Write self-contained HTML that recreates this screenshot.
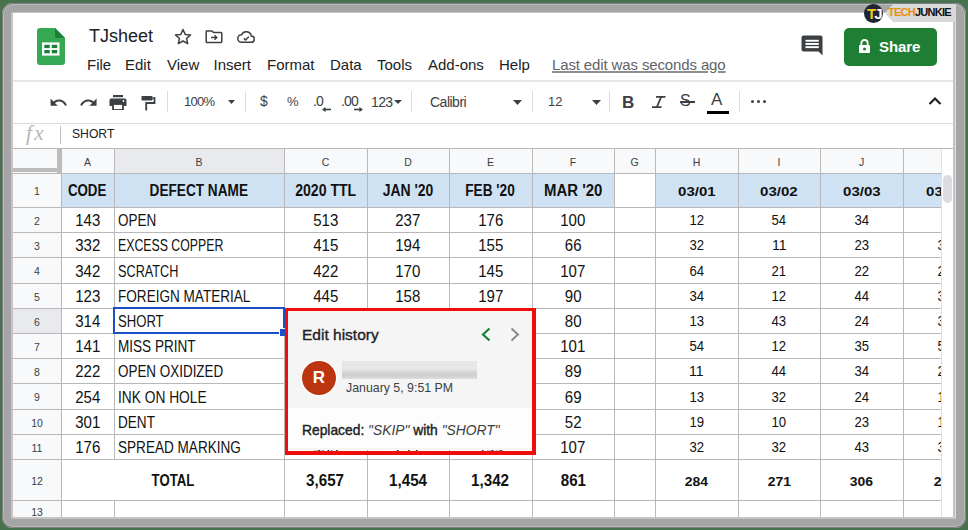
<!DOCTYPE html>
<html><head><meta charset="utf-8">
<style>
html,body{margin:0;padding:0}
body{width:968px;height:530px;overflow:hidden;position:relative;background:#48714d;font-family:"Liberation Sans",sans-serif}
#frame{position:absolute;left:2px;top:3px;width:964px;height:525px;background:#a5a5a5;border-radius:11px;box-shadow:inset 0 0 0 1px #808086, inset 0 0 0 2px #b9b9b9}
#page{position:absolute;left:0;top:0;width:968px;height:530px;clip-path:inset(13px 15px 13px 13px);background:#fff}
.a{position:absolute}
.menu{position:absolute;top:56px;font-size:15px;color:#202124;white-space:nowrap}
.tb{position:absolute}
.sep{position:absolute;top:91px;width:1px;height:21px;background:#dadce0}
</style></head><body>
<div id="frame"></div>
<div class="a" style="left:11px;top:12px;width:945px;height:507px;background:#c4c4c4;border-radius:2px;box-shadow:inset -1px 0 0 #dedede"></div>
<div id="page">
<!-- header -->
<svg class="a" style="left:36px;top:27px" width="30" height="39" viewBox="0 0 30 39">
  <path d="M3 1 H19 L29 11 V35 a3 3 0 0 1 -3 3 H4 a3 3 0 0 1 -3 -3 V4 a3 3 0 0 1 3 -3z" fill="#34a853"/>
  <path d="M19 1 L29 11 H21 a2 2 0 0 1 -2 -2z" fill="#188038"/>
  <rect x="6" y="15.4" width="17.5" height="13.2" fill="#fff"/>
  <rect x="8.3" y="17.8" width="5.4" height="3.3" fill="#188038"/>
  <rect x="15.8" y="17.8" width="5.4" height="3.3" fill="#188038"/>
  <rect x="8.3" y="23" width="5.4" height="3.3" fill="#188038"/>
  <rect x="15.8" y="23" width="5.4" height="3.3" fill="#188038"/>
</svg>
<div class="a" style="left:89px;top:26px;font-size:18px;color:#202124;white-space:nowrap">TJsheet</div>
<!-- star -->
<svg class="a" style="left:173px;top:27.5px" width="20" height="17" viewBox="0 0 20 17">
  <path d="M10 1.5 L12.2 6.4 L17.6 6.9 L13.5 10.5 L14.7 15.7 L10 13 L5.3 15.7 L6.5 10.5 L2.4 6.9 L7.8 6.4 Z" fill="none" stroke="#3c4043" stroke-width="1.5" stroke-linejoin="round"/>
</svg>
<!-- folder move -->
<svg class="a" style="left:205px;top:29px" width="18" height="15" viewBox="0 0 18 15">
  <path d="M1.5 2 H7 L8.5 3.5 H16 a0.8 0.8 0 0 1 0.8 .8 V12.7 a0.8 0.8 0 0 1 -.8 .8 H2 a0.8 0.8 0 0 1 -.8 -.8 V2.5z" fill="none" stroke="#3c4043" stroke-width="1.5"/>
  <path d="M6 8.5 H11.5 M9.5 6.3 L11.8 8.5 L9.5 10.7" fill="none" stroke="#3c4043" stroke-width="1.4"/>
</svg>
<!-- cloud check -->
<svg class="a" style="left:237px;top:30px" width="19" height="14" viewBox="0 0 19 14">
  <path d="M4.6 12.3 H14 a3.1 3.1 0 0 0 .3 -6.2 A5.1 5.1 0 0 0 4.6 4.7 A3.8 3.8 0 0 0 4.6 12.3z" fill="none" stroke="#3c4043" stroke-width="1.5"/>
  <path d="M6.9 8.4 L8.6 10 L11.8 6.8" fill="none" stroke="#3c4043" stroke-width="1.5"/>
</svg>
<!-- menu -->
<div class="menu" style="left:87px">File</div>
<div class="menu" style="left:125px">Edit</div>
<div class="menu" style="left:167px">View</div>
<div class="menu" style="left:213.5px">Insert</div>
<div class="menu" style="left:267px">Format</div>
<div class="menu" style="left:330px">Data</div>
<div class="menu" style="left:377px">Tools</div>
<div class="menu" style="left:428px">Add-ons</div>
<div class="menu" style="left:499px">Help</div>
<div class="menu" style="left:552px;color:#5f6368;text-decoration:underline;text-decoration-color:#8e8e8e;text-decoration-thickness:1.5px;letter-spacing:-0.13px">Last edit was seconds ago</div>
<!-- comment icon -->
<svg class="a" style="left:800px;top:34px" width="25" height="24" viewBox="0 0 25 24">
  <path d="M3.5 1.5 H20.5 a2 2 0 0 1 2 2 V21.5 L18.5 17.5 H3.5 a2 2 0 0 1 -2 -2 V3.5 a2 2 0 0 1 2 -2z" fill="#3c4043"/>
  <rect x="5.5" y="5.8" width="13.3" height="1.9" fill="#fff"/>
  <rect x="5.5" y="9" width="13.3" height="1.9" fill="#fff"/>
  <rect x="5.5" y="12.2" width="13.3" height="1.9" fill="#fff"/>
</svg>
<!-- share -->
<div class="a" style="left:844px;top:28px;width:93px;height:38px;background:#1e7e34;border-radius:5px"></div>
<svg class="a" style="left:858px;top:39px" width="13" height="14" viewBox="0 0 13 14">
  <path d="M3.3 6 V4.2 a3.2 3.2 0 0 1 6.4 0 V6" fill="none" stroke="#fff" stroke-width="1.8"/>
  <rect x="1" y="6" width="11" height="8" rx="1" fill="#fff"/>
  <circle cx="6.5" cy="10" r="1.5" fill="#1e7e34"/>
</svg>
<div class="a" style="left:879px;top:38px;font-size:15px;font-weight:bold;color:#fff;letter-spacing:-0.1px">Share</div>
<!-- header separator -->
<div class="a" style="left:13px;top:80px;width:940px;height:2px;background:#e6e7e8"></div>
<!-- toolbar -->
<svg class="a" style="left:49px;top:93px" width="19.2" height="19.2" viewBox="0 0 24 24"><path d="M12.5 8c-2.65 0-5.05.99-6.9 2.6L2 7v9h9l-3.62-3.62c1.39-1.16 3.16-1.88 5.12-1.88 3.54 0 6.55 2.31 7.6 5.5l2.37-.78C21.08 11.03 17.15 8 12.5 8z" fill="#3c4043"/></svg>
<svg class="a" style="left:79px;top:93px" width="19.2" height="19.2" viewBox="0 0 24 24"><path d="M18.4 10.6C16.55 8.99 14.15 8 11.5 8c-4.65 0-8.58 3.03-9.96 7.22L3.9 16c1.05-3.19 4.05-5.5 7.6-5.5 1.95 0 3.73.72 5.12 1.88L13 16h9V7l-3.6 3.6z" fill="#3c4043"/></svg>
<svg class="a" style="left:109px;top:95px" width="18" height="15" viewBox="0 0 18 15">
  <rect x="4" y="0" width="10" height="2.2" fill="#3c4043"/>
  <path d="M2 3.5 H16 a1.5 1.5 0 0 1 1.5 1.5 V11 H14 V9 H4 V11 H0.5 V5 A1.5 1.5 0 0 1 2 3.5z" fill="#3c4043"/>
  <rect x="4" y="9" width="10" height="6" fill="none" stroke="#3c4043" stroke-width="1.8"/>
  <circle cx="14.5" cy="6" r="0.9" fill="#fff"/>
</svg>
<svg class="a" style="left:141px;top:95px" width="15" height="16" viewBox="0 0 15 16">
  <rect x="0.5" y="1" width="11" height="4.5" rx="0.7" fill="#3c4043"/>
  <path d="M11.5 3.2 H13.5 V8 H5.2 V15.5" fill="none" stroke="#3c4043" stroke-width="1.8"/>
</svg>
<div class="sep" style="left:167px"></div>
<div class="a" style="left:184px;top:94px;font-size:13px;color:#3c4043;letter-spacing:-0.7px">100%</div>
<svg class="a" style="left:228px;top:100px" width="7" height="4" viewBox="0 0 9 5" preserveAspectRatio="none"><path d="M0 0 H9 L4.5 5z" fill="#3c4043"/></svg>
<div class="sep" style="left:245px"></div>
<div class="a" style="left:260px;top:93px;font-size:14px;color:#3c4043">$</div>
<div class="a" style="left:287px;top:94px;font-size:13px;color:#3c4043">%</div>
<div class="a" style="left:313px;top:93px;font-size:14px;color:#3c4043;letter-spacing:-0.8px">.0</div>
<svg class="a" style="left:322px;top:107px" width="9" height="5" viewBox="0 0 9 5"><path d="M9 2.5 H3" stroke="#3c4043" stroke-width="1.6"/><path d="M0 2.5 L3.6 0 V5z" fill="#3c4043"/></svg>
<div class="a" style="left:341px;top:93px;font-size:14px;color:#3c4043;letter-spacing:-0.8px">.00</div>
<svg class="a" style="left:354px;top:107px" width="9" height="5" viewBox="0 0 9 5"><path d="M0 2.5 H6" stroke="#3c4043" stroke-width="1.6"/><path d="M9 2.5 L5.4 0 V5z" fill="#3c4043"/></svg>
<div class="a" style="left:371px;top:94px;font-size:14px;color:#3c4043;letter-spacing:-0.6px">123</div>
<svg class="a" style="left:394px;top:100px" width="8" height="4" viewBox="0 0 9 5" preserveAspectRatio="none"><path d="M0 0 H9 L4.5 5z" fill="#3c4043"/></svg>
<div class="sep" style="left:411px"></div>
<div class="a" style="left:430px;top:94px;font-size:14px;color:#3c4043;letter-spacing:-0.5px">Calibri</div>
<svg class="a" style="left:513px;top:100px" width="9" height="5" viewBox="0 0 9 5"><path d="M0 0 H9 L4.5 5z" fill="#3c4043"/></svg>
<div class="sep" style="left:532px"></div>
<div class="a" style="left:548px;top:94px;font-size:13px;color:#3c4043">12</div>
<svg class="a" style="left:592px;top:100px" width="9" height="5" viewBox="0 0 9 5"><path d="M0 0 H9 L4.5 5z" fill="#3c4043"/></svg>
<div class="sep" style="left:609px"></div>
<div class="a" style="left:622px;top:93px;font-size:17px;font-weight:bold;color:#3c4043">B</div>
<svg class="a" style="left:650px;top:94px" width="18" height="16" viewBox="0 0 18 16"><path d="M6 2.8 H15.5 M2 13.2 H11.5 M11.2 2.8 L6.8 13.2" fill="none" stroke="#3c4043" stroke-width="1.7"/></svg>
<div class="a" style="left:680px;top:92px;font-size:16px;color:#3c4043">S</div>
<div class="a" style="left:680px;top:101px;width:15px;height:1.6px;background:#3c4043"></div>
<div class="a" style="left:711px;top:90px;font-size:17px;color:#3c4043">A</div>
<div class="a" style="left:707px;top:111px;width:22px;height:3px;background:#000"></div>
<div class="sep" style="left:739px"></div>
<div class="a" style="left:751px;top:100px;width:3px;height:3px;background:#3c4043;border-radius:50%"></div>
<div class="a" style="left:757px;top:100px;width:3px;height:3px;background:#3c4043;border-radius:50%"></div>
<div class="a" style="left:763px;top:100px;width:3px;height:3px;background:#3c4043;border-radius:50%"></div>
<svg class="a" style="left:928px;top:96px" width="14" height="10" viewBox="0 0 14 10"><path d="M1.5 8 L7 2.5 L12.5 8" fill="none" stroke="#202124" stroke-width="2.2"/></svg>
<!-- toolbar bottom -->
<div class="a" style="left:13px;top:123px;width:940px;height:1px;background:#dadce0"></div>
<!-- formula bar -->
<div class="a" style="left:26px;top:121px;font-family:'Liberation Serif',serif;font-style:italic;font-size:21px;color:#b5b5b5;letter-spacing:2.5px">fx</div>
<div class="a" style="left:60px;top:126px;width:1px;height:18px;background:#c0c0c0"></div>
<div class="a" style="left:72px;top:126px;font-size:13.5px;color:#202124;transform:scaleX(0.9);transform-origin:left">SHORT</div>
<div style="position:absolute;left:13px;top:173px;width:48px;height:367px;background:#f8f9fa"></div>
<div style="position:absolute;left:13px;top:148px;width:940px;height:25px;background:#f8f9fa"></div>
<div style="position:absolute;left:114px;top:148px;width:170px;height:25px;background:#e8eaed"></div>
<div style="position:absolute;left:13px;top:308px;width:48px;height:25px;background:#e8eaed"></div>
<div style="position:absolute;left:61px;top:173px;width:553px;height:34px;background:#cfe2f3"></div>
<div style="position:absolute;left:655px;top:173px;width:335px;height:34px;background:#cfe2f3"></div>
<div style="position:absolute;left:13px;top:148px;width:940px;height:1px;background:#b8b8b8"></div>
<div style="position:absolute;left:13px;top:173px;width:940px;height:1px;background:#b8b8b8"></div>
<div style="position:absolute;left:13px;top:207px;width:940px;height:1px;background:#b8b8b8"></div>
<div style="position:absolute;left:13px;top:232px;width:940px;height:1px;background:#b8b8b8"></div>
<div style="position:absolute;left:13px;top:257px;width:940px;height:1px;background:#b8b8b8"></div>
<div style="position:absolute;left:13px;top:283px;width:940px;height:1px;background:#b8b8b8"></div>
<div style="position:absolute;left:13px;top:308px;width:940px;height:1px;background:#b8b8b8"></div>
<div style="position:absolute;left:13px;top:333px;width:940px;height:1px;background:#b8b8b8"></div>
<div style="position:absolute;left:13px;top:358px;width:940px;height:1px;background:#b8b8b8"></div>
<div style="position:absolute;left:13px;top:383px;width:940px;height:1px;background:#b8b8b8"></div>
<div style="position:absolute;left:13px;top:409px;width:940px;height:1px;background:#b8b8b8"></div>
<div style="position:absolute;left:13px;top:434px;width:940px;height:1px;background:#b8b8b8"></div>
<div style="position:absolute;left:13px;top:459px;width:940px;height:1px;background:#b8b8b8"></div>
<div style="position:absolute;left:13px;top:500px;width:940px;height:1px;background:#b8b8b8"></div>
<div style="position:absolute;left:13px;top:522px;width:940px;height:1px;background:#b8b8b8"></div>
<div style="position:absolute;left:61px;top:148px;width:1px;height:392px;background:#b8b8b8"></div>
<div style="position:absolute;left:114px;top:148px;width:1px;height:311px;background:#b8b8b8"></div>
<div style="position:absolute;left:114px;top:500px;width:1px;height:40px;background:#b8b8b8"></div>
<div style="position:absolute;left:284px;top:148px;width:1px;height:392px;background:#b8b8b8"></div>
<div style="position:absolute;left:367px;top:148px;width:1px;height:392px;background:#b8b8b8"></div>
<div style="position:absolute;left:449px;top:148px;width:1px;height:392px;background:#b8b8b8"></div>
<div style="position:absolute;left:532px;top:148px;width:1px;height:392px;background:#b8b8b8"></div>
<div style="position:absolute;left:614px;top:148px;width:1px;height:392px;background:#b8b8b8"></div>
<div style="position:absolute;left:655px;top:148px;width:1px;height:392px;background:#b8b8b8"></div>
<div style="position:absolute;left:738px;top:148px;width:1px;height:392px;background:#b8b8b8"></div>
<div style="position:absolute;left:820px;top:148px;width:1px;height:392px;background:#b8b8b8"></div>
<div style="position:absolute;left:903px;top:148px;width:1px;height:392px;background:#b8b8b8"></div>
<div style="position:absolute;left:61px;top:148px;width:53px;height:25px;line-height:28px;text-align:center;font-size:10.5px;color:#3c4043">A</div>
<div style="position:absolute;left:114px;top:148px;width:170px;height:25px;line-height:28px;text-align:center;font-size:10.5px;color:#3c4043">B</div>
<div style="position:absolute;left:284px;top:148px;width:83px;height:25px;line-height:28px;text-align:center;font-size:10.5px;color:#3c4043">C</div>
<div style="position:absolute;left:367px;top:148px;width:82px;height:25px;line-height:28px;text-align:center;font-size:10.5px;color:#3c4043">D</div>
<div style="position:absolute;left:449px;top:148px;width:83px;height:25px;line-height:28px;text-align:center;font-size:10.5px;color:#3c4043">E</div>
<div style="position:absolute;left:532px;top:148px;width:82px;height:25px;line-height:28px;text-align:center;font-size:10.5px;color:#3c4043">F</div>
<div style="position:absolute;left:614px;top:148px;width:41px;height:25px;line-height:28px;text-align:center;font-size:10.5px;color:#3c4043">G</div>
<div style="position:absolute;left:655px;top:148px;width:83px;height:25px;line-height:28px;text-align:center;font-size:10.5px;color:#3c4043">H</div>
<div style="position:absolute;left:738px;top:148px;width:82px;height:25px;line-height:28px;text-align:center;font-size:10.5px;color:#3c4043">I</div>
<div style="position:absolute;left:820px;top:148px;width:83px;height:25px;line-height:28px;text-align:center;font-size:10.5px;color:#3c4043">J</div>
<div style="position:absolute;left:903px;top:148px;width:87px;height:25px;line-height:28px;text-align:center;font-size:10.5px;color:#3c4043">K</div>
<div style="position:absolute;left:13px;top:173px;width:48px;height:34px;line-height:37px;text-align:center;font-size:10.5px;color:#3c4043">1</div>
<div style="position:absolute;left:13px;top:207px;width:48px;height:25px;line-height:28px;text-align:center;font-size:10.5px;color:#3c4043">2</div>
<div style="position:absolute;left:13px;top:232px;width:48px;height:25px;line-height:28px;text-align:center;font-size:10.5px;color:#3c4043">3</div>
<div style="position:absolute;left:13px;top:257px;width:48px;height:26px;line-height:29px;text-align:center;font-size:10.5px;color:#3c4043">4</div>
<div style="position:absolute;left:13px;top:283px;width:48px;height:25px;line-height:28px;text-align:center;font-size:10.5px;color:#3c4043">5</div>
<div style="position:absolute;left:13px;top:308px;width:48px;height:25px;line-height:28px;text-align:center;font-size:10.5px;color:#3c4043">6</div>
<div style="position:absolute;left:13px;top:333px;width:48px;height:25px;line-height:28px;text-align:center;font-size:10.5px;color:#3c4043">7</div>
<div style="position:absolute;left:13px;top:358px;width:48px;height:25px;line-height:28px;text-align:center;font-size:10.5px;color:#3c4043">8</div>
<div style="position:absolute;left:13px;top:383px;width:48px;height:26px;line-height:29px;text-align:center;font-size:10.5px;color:#3c4043">9</div>
<div style="position:absolute;left:13px;top:409px;width:48px;height:25px;line-height:28px;text-align:center;font-size:10.5px;color:#3c4043">10</div>
<div style="position:absolute;left:13px;top:434px;width:48px;height:25px;line-height:28px;text-align:center;font-size:10.5px;color:#3c4043">11</div>
<div style="position:absolute;left:13px;top:459px;width:48px;height:41px;line-height:44px;text-align:center;font-size:10.5px;color:#3c4043">12</div>
<div style="position:absolute;left:13px;top:500px;width:48px;height:22px;line-height:25px;text-align:center;font-size:10.5px;color:#3c4043">13</div>
<div style="position:absolute;left:61px;top:174px;width:53px;height:34px;line-height:34px;text-align:center;box-sizing:border-box;font-size:16px;font-weight:bold;color:#111;white-space:nowrap"><span style="display:inline-block;transform:scaleX(0.832);transform-origin:center">CODE</span></div>
<div style="position:absolute;left:114px;top:174px;width:170px;height:34px;line-height:34px;text-align:center;box-sizing:border-box;font-size:16px;font-weight:bold;color:#111;white-space:nowrap"><span style="display:inline-block;transform:scaleX(0.852);transform-origin:center">DEFECT NAME</span></div>
<div style="position:absolute;left:284px;top:174px;width:83px;height:34px;line-height:34px;text-align:center;box-sizing:border-box;font-size:16px;font-weight:bold;color:#111;white-space:nowrap"><span style="display:inline-block;transform:scaleX(0.881);transform-origin:center">2020 TTL</span></div>
<div style="position:absolute;left:367px;top:174px;width:82px;height:34px;line-height:34px;text-align:center;box-sizing:border-box;font-size:16px;font-weight:bold;color:#111;white-space:nowrap"><span style="display:inline-block;transform:scaleX(0.871);transform-origin:center">JAN '20</span></div>
<div style="position:absolute;left:449px;top:174px;width:83px;height:34px;line-height:34px;text-align:center;box-sizing:border-box;font-size:16px;font-weight:bold;color:#111;white-space:nowrap"><span style="display:inline-block;transform:scaleX(0.852);transform-origin:center">FEB '20</span></div>
<div style="position:absolute;left:532px;top:174px;width:82px;height:34px;line-height:34px;text-align:center;box-sizing:border-box;font-size:16px;font-weight:bold;color:#111;white-space:nowrap"><span style="display:inline-block;transform:scaleX(0.934);transform-origin:center">MAR '20</span></div>
<div style="position:absolute;left:655px;top:175px;width:83px;height:34px;line-height:34px;text-align:center;box-sizing:border-box;font-size:13.5px;font-weight:bold;color:#111;white-space:nowrap"><span style="display:inline-block;transform:scaleX(1.113);transform-origin:center">03/01</span></div>
<div style="position:absolute;left:738px;top:175px;width:82px;height:34px;line-height:34px;text-align:center;box-sizing:border-box;font-size:13.5px;font-weight:bold;color:#111;white-space:nowrap"><span style="display:inline-block;transform:scaleX(1.113);transform-origin:center">03/02</span></div>
<div style="position:absolute;left:820px;top:175px;width:83px;height:34px;line-height:34px;text-align:center;box-sizing:border-box;font-size:13.5px;font-weight:bold;color:#111;white-space:nowrap"><span style="display:inline-block;transform:scaleX(1.113);transform-origin:center">03/03</span></div>
<div style="position:absolute;left:904px;top:175px;width:82px;height:34px;line-height:34px;text-align:center;box-sizing:border-box;font-size:13.5px;font-weight:bold;color:#111;white-space:nowrap"><span style="display:inline-block;transform:scaleX(1.113);transform-origin:center">03/04</span></div>
<div style="position:absolute;left:61px;top:208px;width:53px;height:25px;line-height:25px;text-align:center;box-sizing:border-box;font-size:16.5px;font-weight:normal;color:#111;white-space:nowrap"><span style="display:inline-block;transform:scaleX(0.911);transform-origin:center">143</span></div>
<div style="position:absolute;left:114px;top:208px;width:170px;height:25px;line-height:25px;text-align:left;padding-left:4px;box-sizing:border-box;font-size:16.5px;font-weight:normal;color:#111;white-space:nowrap"><span style="display:inline-block;transform:scaleX(0.816);transform-origin:left">OPEN</span></div>
<div style="position:absolute;left:284px;top:208px;width:83px;height:25px;line-height:25px;text-align:center;box-sizing:border-box;font-size:16.5px;font-weight:normal;color:#111;white-space:nowrap"><span style="display:inline-block;transform:scaleX(0.911);transform-origin:center">513</span></div>
<div style="position:absolute;left:367px;top:208px;width:82px;height:25px;line-height:25px;text-align:center;box-sizing:border-box;font-size:16.5px;font-weight:normal;color:#111;white-space:nowrap"><span style="display:inline-block;transform:scaleX(0.911);transform-origin:center">237</span></div>
<div style="position:absolute;left:449px;top:208px;width:83px;height:25px;line-height:25px;text-align:center;box-sizing:border-box;font-size:16.5px;font-weight:normal;color:#111;white-space:nowrap"><span style="display:inline-block;transform:scaleX(0.911);transform-origin:center">176</span></div>
<div style="position:absolute;left:532px;top:208px;width:82px;height:25px;line-height:25px;text-align:center;box-sizing:border-box;font-size:16.5px;font-weight:normal;color:#111;white-space:nowrap"><span style="display:inline-block;transform:scaleX(0.911);transform-origin:center">100</span></div>
<div style="position:absolute;left:655px;top:208px;width:83px;height:25px;line-height:25px;text-align:center;box-sizing:border-box;font-size:14px;font-weight:normal;color:#111;white-space:nowrap"><span style="display:inline-block;transform:scaleX(0.938);transform-origin:center">12</span></div>
<div style="position:absolute;left:738px;top:208px;width:82px;height:25px;line-height:25px;text-align:center;box-sizing:border-box;font-size:14px;font-weight:normal;color:#111;white-space:nowrap"><span style="display:inline-block;transform:scaleX(0.938);transform-origin:center">54</span></div>
<div style="position:absolute;left:820px;top:208px;width:83px;height:25px;line-height:25px;text-align:center;box-sizing:border-box;font-size:14px;font-weight:normal;color:#111;white-space:nowrap"><span style="display:inline-block;transform:scaleX(0.938);transform-origin:center">34</span></div>
<div style="position:absolute;left:61px;top:233px;width:53px;height:25px;line-height:25px;text-align:center;box-sizing:border-box;font-size:16.5px;font-weight:normal;color:#111;white-space:nowrap"><span style="display:inline-block;transform:scaleX(0.911);transform-origin:center">332</span></div>
<div style="position:absolute;left:114px;top:233px;width:170px;height:25px;line-height:25px;text-align:left;padding-left:4px;box-sizing:border-box;font-size:16.5px;font-weight:normal;color:#111;white-space:nowrap"><span style="display:inline-block;transform:scaleX(0.746);transform-origin:left">EXCESS COPPER</span></div>
<div style="position:absolute;left:284px;top:233px;width:83px;height:25px;line-height:25px;text-align:center;box-sizing:border-box;font-size:16.5px;font-weight:normal;color:#111;white-space:nowrap"><span style="display:inline-block;transform:scaleX(0.911);transform-origin:center">415</span></div>
<div style="position:absolute;left:367px;top:233px;width:82px;height:25px;line-height:25px;text-align:center;box-sizing:border-box;font-size:16.5px;font-weight:normal;color:#111;white-space:nowrap"><span style="display:inline-block;transform:scaleX(0.911);transform-origin:center">194</span></div>
<div style="position:absolute;left:449px;top:233px;width:83px;height:25px;line-height:25px;text-align:center;box-sizing:border-box;font-size:16.5px;font-weight:normal;color:#111;white-space:nowrap"><span style="display:inline-block;transform:scaleX(0.911);transform-origin:center">155</span></div>
<div style="position:absolute;left:532px;top:233px;width:82px;height:25px;line-height:25px;text-align:center;box-sizing:border-box;font-size:16.5px;font-weight:normal;color:#111;white-space:nowrap"><span style="display:inline-block;transform:scaleX(0.911);transform-origin:center">66</span></div>
<div style="position:absolute;left:655px;top:233px;width:83px;height:25px;line-height:25px;text-align:center;box-sizing:border-box;font-size:14px;font-weight:normal;color:#111;white-space:nowrap"><span style="display:inline-block;transform:scaleX(0.938);transform-origin:center">32</span></div>
<div style="position:absolute;left:738px;top:233px;width:82px;height:25px;line-height:25px;text-align:center;box-sizing:border-box;font-size:14px;font-weight:normal;color:#111;white-space:nowrap"><span style="display:inline-block;transform:scaleX(1.005);transform-origin:center">11</span></div>
<div style="position:absolute;left:820px;top:233px;width:83px;height:25px;line-height:25px;text-align:center;box-sizing:border-box;font-size:14px;font-weight:normal;color:#111;white-space:nowrap"><span style="display:inline-block;transform:scaleX(0.938);transform-origin:center">23</span></div>
<div style="position:absolute;left:904px;top:233px;width:82px;height:25px;line-height:25px;text-align:center;box-sizing:border-box;font-size:14px;font-weight:normal;color:#111;white-space:nowrap"><span style="display:inline-block;transform:scaleX(0.938);transform-origin:center">35</span></div>
<div style="position:absolute;left:61px;top:258px;width:53px;height:26px;line-height:26px;text-align:center;box-sizing:border-box;font-size:16.5px;font-weight:normal;color:#111;white-space:nowrap"><span style="display:inline-block;transform:scaleX(0.911);transform-origin:center">342</span></div>
<div style="position:absolute;left:114px;top:258px;width:170px;height:26px;line-height:26px;text-align:left;padding-left:4px;box-sizing:border-box;font-size:16.5px;font-weight:normal;color:#111;white-space:nowrap"><span style="display:inline-block;transform:scaleX(0.769);transform-origin:left">SCRATCH</span></div>
<div style="position:absolute;left:284px;top:258px;width:83px;height:26px;line-height:26px;text-align:center;box-sizing:border-box;font-size:16.5px;font-weight:normal;color:#111;white-space:nowrap"><span style="display:inline-block;transform:scaleX(0.911);transform-origin:center">422</span></div>
<div style="position:absolute;left:367px;top:258px;width:82px;height:26px;line-height:26px;text-align:center;box-sizing:border-box;font-size:16.5px;font-weight:normal;color:#111;white-space:nowrap"><span style="display:inline-block;transform:scaleX(0.911);transform-origin:center">170</span></div>
<div style="position:absolute;left:449px;top:258px;width:83px;height:26px;line-height:26px;text-align:center;box-sizing:border-box;font-size:16.5px;font-weight:normal;color:#111;white-space:nowrap"><span style="display:inline-block;transform:scaleX(0.911);transform-origin:center">145</span></div>
<div style="position:absolute;left:532px;top:258px;width:82px;height:26px;line-height:26px;text-align:center;box-sizing:border-box;font-size:16.5px;font-weight:normal;color:#111;white-space:nowrap"><span style="display:inline-block;transform:scaleX(0.911);transform-origin:center">107</span></div>
<div style="position:absolute;left:655px;top:258px;width:83px;height:26px;line-height:26px;text-align:center;box-sizing:border-box;font-size:14px;font-weight:normal;color:#111;white-space:nowrap"><span style="display:inline-block;transform:scaleX(0.938);transform-origin:center">64</span></div>
<div style="position:absolute;left:738px;top:258px;width:82px;height:26px;line-height:26px;text-align:center;box-sizing:border-box;font-size:14px;font-weight:normal;color:#111;white-space:nowrap"><span style="display:inline-block;transform:scaleX(0.938);transform-origin:center">21</span></div>
<div style="position:absolute;left:820px;top:258px;width:83px;height:26px;line-height:26px;text-align:center;box-sizing:border-box;font-size:14px;font-weight:normal;color:#111;white-space:nowrap"><span style="display:inline-block;transform:scaleX(0.938);transform-origin:center">22</span></div>
<div style="position:absolute;left:904px;top:258px;width:82px;height:26px;line-height:26px;text-align:center;box-sizing:border-box;font-size:14px;font-weight:normal;color:#111;white-space:nowrap"><span style="display:inline-block;transform:scaleX(0.938);transform-origin:center">25</span></div>
<div style="position:absolute;left:61px;top:284px;width:53px;height:25px;line-height:25px;text-align:center;box-sizing:border-box;font-size:16.5px;font-weight:normal;color:#111;white-space:nowrap"><span style="display:inline-block;transform:scaleX(0.911);transform-origin:center">123</span></div>
<div style="position:absolute;left:114px;top:284px;width:170px;height:25px;line-height:25px;text-align:left;padding-left:4px;box-sizing:border-box;font-size:16.5px;font-weight:normal;color:#111;white-space:nowrap"><span style="display:inline-block;transform:scaleX(0.822);transform-origin:left">FOREIGN MATERIAL</span></div>
<div style="position:absolute;left:284px;top:284px;width:83px;height:25px;line-height:25px;text-align:center;box-sizing:border-box;font-size:16.5px;font-weight:normal;color:#111;white-space:nowrap"><span style="display:inline-block;transform:scaleX(0.911);transform-origin:center">445</span></div>
<div style="position:absolute;left:367px;top:284px;width:82px;height:25px;line-height:25px;text-align:center;box-sizing:border-box;font-size:16.5px;font-weight:normal;color:#111;white-space:nowrap"><span style="display:inline-block;transform:scaleX(0.911);transform-origin:center">158</span></div>
<div style="position:absolute;left:449px;top:284px;width:83px;height:25px;line-height:25px;text-align:center;box-sizing:border-box;font-size:16.5px;font-weight:normal;color:#111;white-space:nowrap"><span style="display:inline-block;transform:scaleX(0.911);transform-origin:center">197</span></div>
<div style="position:absolute;left:532px;top:284px;width:82px;height:25px;line-height:25px;text-align:center;box-sizing:border-box;font-size:16.5px;font-weight:normal;color:#111;white-space:nowrap"><span style="display:inline-block;transform:scaleX(0.911);transform-origin:center">90</span></div>
<div style="position:absolute;left:655px;top:284px;width:83px;height:25px;line-height:25px;text-align:center;box-sizing:border-box;font-size:14px;font-weight:normal;color:#111;white-space:nowrap"><span style="display:inline-block;transform:scaleX(0.938);transform-origin:center">34</span></div>
<div style="position:absolute;left:738px;top:284px;width:82px;height:25px;line-height:25px;text-align:center;box-sizing:border-box;font-size:14px;font-weight:normal;color:#111;white-space:nowrap"><span style="display:inline-block;transform:scaleX(0.938);transform-origin:center">12</span></div>
<div style="position:absolute;left:820px;top:284px;width:83px;height:25px;line-height:25px;text-align:center;box-sizing:border-box;font-size:14px;font-weight:normal;color:#111;white-space:nowrap"><span style="display:inline-block;transform:scaleX(0.938);transform-origin:center">44</span></div>
<div style="position:absolute;left:904px;top:284px;width:82px;height:25px;line-height:25px;text-align:center;box-sizing:border-box;font-size:14px;font-weight:normal;color:#111;white-space:nowrap"><span style="display:inline-block;transform:scaleX(0.938);transform-origin:center">35</span></div>
<div style="position:absolute;left:61px;top:309px;width:53px;height:25px;line-height:25px;text-align:center;box-sizing:border-box;font-size:16.5px;font-weight:normal;color:#111;white-space:nowrap"><span style="display:inline-block;transform:scaleX(0.911);transform-origin:center">314</span></div>
<div style="position:absolute;left:114px;top:309px;width:170px;height:25px;line-height:25px;text-align:left;padding-left:4px;box-sizing:border-box;font-size:16.5px;font-weight:normal;color:#111;white-space:nowrap"><span style="display:inline-block;transform:scaleX(0.794);transform-origin:left">SHORT</span></div>
<div style="position:absolute;left:532px;top:309px;width:82px;height:25px;line-height:25px;text-align:center;box-sizing:border-box;font-size:16.5px;font-weight:normal;color:#111;white-space:nowrap"><span style="display:inline-block;transform:scaleX(0.911);transform-origin:center">80</span></div>
<div style="position:absolute;left:655px;top:309px;width:83px;height:25px;line-height:25px;text-align:center;box-sizing:border-box;font-size:14px;font-weight:normal;color:#111;white-space:nowrap"><span style="display:inline-block;transform:scaleX(0.938);transform-origin:center">13</span></div>
<div style="position:absolute;left:738px;top:309px;width:82px;height:25px;line-height:25px;text-align:center;box-sizing:border-box;font-size:14px;font-weight:normal;color:#111;white-space:nowrap"><span style="display:inline-block;transform:scaleX(0.938);transform-origin:center">43</span></div>
<div style="position:absolute;left:820px;top:309px;width:83px;height:25px;line-height:25px;text-align:center;box-sizing:border-box;font-size:14px;font-weight:normal;color:#111;white-space:nowrap"><span style="display:inline-block;transform:scaleX(0.938);transform-origin:center">24</span></div>
<div style="position:absolute;left:904px;top:309px;width:82px;height:25px;line-height:25px;text-align:center;box-sizing:border-box;font-size:14px;font-weight:normal;color:#111;white-space:nowrap"><span style="display:inline-block;transform:scaleX(0.938);transform-origin:center">35</span></div>
<div style="position:absolute;left:61px;top:334px;width:53px;height:25px;line-height:25px;text-align:center;box-sizing:border-box;font-size:16.5px;font-weight:normal;color:#111;white-space:nowrap"><span style="display:inline-block;transform:scaleX(0.911);transform-origin:center">141</span></div>
<div style="position:absolute;left:114px;top:334px;width:170px;height:25px;line-height:25px;text-align:left;padding-left:4px;box-sizing:border-box;font-size:16.5px;font-weight:normal;color:#111;white-space:nowrap"><span style="display:inline-block;transform:scaleX(0.821);transform-origin:left">MISS PRINT</span></div>
<div style="position:absolute;left:532px;top:334px;width:82px;height:25px;line-height:25px;text-align:center;box-sizing:border-box;font-size:16.5px;font-weight:normal;color:#111;white-space:nowrap"><span style="display:inline-block;transform:scaleX(0.911);transform-origin:center">101</span></div>
<div style="position:absolute;left:655px;top:334px;width:83px;height:25px;line-height:25px;text-align:center;box-sizing:border-box;font-size:14px;font-weight:normal;color:#111;white-space:nowrap"><span style="display:inline-block;transform:scaleX(0.938);transform-origin:center">54</span></div>
<div style="position:absolute;left:738px;top:334px;width:82px;height:25px;line-height:25px;text-align:center;box-sizing:border-box;font-size:14px;font-weight:normal;color:#111;white-space:nowrap"><span style="display:inline-block;transform:scaleX(0.938);transform-origin:center">12</span></div>
<div style="position:absolute;left:820px;top:334px;width:83px;height:25px;line-height:25px;text-align:center;box-sizing:border-box;font-size:14px;font-weight:normal;color:#111;white-space:nowrap"><span style="display:inline-block;transform:scaleX(0.938);transform-origin:center">35</span></div>
<div style="position:absolute;left:904px;top:334px;width:82px;height:25px;line-height:25px;text-align:center;box-sizing:border-box;font-size:14px;font-weight:normal;color:#111;white-space:nowrap"><span style="display:inline-block;transform:scaleX(0.938);transform-origin:center">55</span></div>
<div style="position:absolute;left:61px;top:359px;width:53px;height:25px;line-height:25px;text-align:center;box-sizing:border-box;font-size:16.5px;font-weight:normal;color:#111;white-space:nowrap"><span style="display:inline-block;transform:scaleX(0.911);transform-origin:center">222</span></div>
<div style="position:absolute;left:114px;top:359px;width:170px;height:25px;line-height:25px;text-align:left;padding-left:4px;box-sizing:border-box;font-size:16.5px;font-weight:normal;color:#111;white-space:nowrap"><span style="display:inline-block;transform:scaleX(0.814);transform-origin:left">OPEN OXIDIZED</span></div>
<div style="position:absolute;left:532px;top:359px;width:82px;height:25px;line-height:25px;text-align:center;box-sizing:border-box;font-size:16.5px;font-weight:normal;color:#111;white-space:nowrap"><span style="display:inline-block;transform:scaleX(0.911);transform-origin:center">89</span></div>
<div style="position:absolute;left:655px;top:359px;width:83px;height:25px;line-height:25px;text-align:center;box-sizing:border-box;font-size:14px;font-weight:normal;color:#111;white-space:nowrap"><span style="display:inline-block;transform:scaleX(1.005);transform-origin:center">11</span></div>
<div style="position:absolute;left:738px;top:359px;width:82px;height:25px;line-height:25px;text-align:center;box-sizing:border-box;font-size:14px;font-weight:normal;color:#111;white-space:nowrap"><span style="display:inline-block;transform:scaleX(0.938);transform-origin:center">44</span></div>
<div style="position:absolute;left:820px;top:359px;width:83px;height:25px;line-height:25px;text-align:center;box-sizing:border-box;font-size:14px;font-weight:normal;color:#111;white-space:nowrap"><span style="display:inline-block;transform:scaleX(0.938);transform-origin:center">34</span></div>
<div style="position:absolute;left:904px;top:359px;width:82px;height:25px;line-height:25px;text-align:center;box-sizing:border-box;font-size:14px;font-weight:normal;color:#111;white-space:nowrap"><span style="display:inline-block;transform:scaleX(0.938);transform-origin:center">25</span></div>
<div style="position:absolute;left:61px;top:384px;width:53px;height:26px;line-height:26px;text-align:center;box-sizing:border-box;font-size:16.5px;font-weight:normal;color:#111;white-space:nowrap"><span style="display:inline-block;transform:scaleX(0.911);transform-origin:center">254</span></div>
<div style="position:absolute;left:114px;top:384px;width:170px;height:26px;line-height:26px;text-align:left;padding-left:4px;box-sizing:border-box;font-size:16.5px;font-weight:normal;color:#111;white-space:nowrap"><span style="display:inline-block;transform:scaleX(0.833);transform-origin:left">INK ON HOLE</span></div>
<div style="position:absolute;left:532px;top:384px;width:82px;height:26px;line-height:26px;text-align:center;box-sizing:border-box;font-size:16.5px;font-weight:normal;color:#111;white-space:nowrap"><span style="display:inline-block;transform:scaleX(0.911);transform-origin:center">69</span></div>
<div style="position:absolute;left:655px;top:384px;width:83px;height:26px;line-height:26px;text-align:center;box-sizing:border-box;font-size:14px;font-weight:normal;color:#111;white-space:nowrap"><span style="display:inline-block;transform:scaleX(0.938);transform-origin:center">13</span></div>
<div style="position:absolute;left:738px;top:384px;width:82px;height:26px;line-height:26px;text-align:center;box-sizing:border-box;font-size:14px;font-weight:normal;color:#111;white-space:nowrap"><span style="display:inline-block;transform:scaleX(0.938);transform-origin:center">32</span></div>
<div style="position:absolute;left:820px;top:384px;width:83px;height:26px;line-height:26px;text-align:center;box-sizing:border-box;font-size:14px;font-weight:normal;color:#111;white-space:nowrap"><span style="display:inline-block;transform:scaleX(0.938);transform-origin:center">24</span></div>
<div style="position:absolute;left:904px;top:384px;width:82px;height:26px;line-height:26px;text-align:center;box-sizing:border-box;font-size:14px;font-weight:normal;color:#111;white-space:nowrap"><span style="display:inline-block;transform:scaleX(0.938);transform-origin:center">15</span></div>
<div style="position:absolute;left:61px;top:410px;width:53px;height:25px;line-height:25px;text-align:center;box-sizing:border-box;font-size:16.5px;font-weight:normal;color:#111;white-space:nowrap"><span style="display:inline-block;transform:scaleX(0.911);transform-origin:center">301</span></div>
<div style="position:absolute;left:114px;top:410px;width:170px;height:25px;line-height:25px;text-align:left;padding-left:4px;box-sizing:border-box;font-size:16.5px;font-weight:normal;color:#111;white-space:nowrap"><span style="display:inline-block;transform:scaleX(0.822);transform-origin:left">DENT</span></div>
<div style="position:absolute;left:532px;top:410px;width:82px;height:25px;line-height:25px;text-align:center;box-sizing:border-box;font-size:16.5px;font-weight:normal;color:#111;white-space:nowrap"><span style="display:inline-block;transform:scaleX(0.911);transform-origin:center">52</span></div>
<div style="position:absolute;left:655px;top:410px;width:83px;height:25px;line-height:25px;text-align:center;box-sizing:border-box;font-size:14px;font-weight:normal;color:#111;white-space:nowrap"><span style="display:inline-block;transform:scaleX(0.938);transform-origin:center">19</span></div>
<div style="position:absolute;left:738px;top:410px;width:82px;height:25px;line-height:25px;text-align:center;box-sizing:border-box;font-size:14px;font-weight:normal;color:#111;white-space:nowrap"><span style="display:inline-block;transform:scaleX(0.938);transform-origin:center">10</span></div>
<div style="position:absolute;left:820px;top:410px;width:83px;height:25px;line-height:25px;text-align:center;box-sizing:border-box;font-size:14px;font-weight:normal;color:#111;white-space:nowrap"><span style="display:inline-block;transform:scaleX(0.938);transform-origin:center">23</span></div>
<div style="position:absolute;left:904px;top:410px;width:82px;height:25px;line-height:25px;text-align:center;box-sizing:border-box;font-size:14px;font-weight:normal;color:#111;white-space:nowrap"><span style="display:inline-block;transform:scaleX(0.938);transform-origin:center">15</span></div>
<div style="position:absolute;left:61px;top:435px;width:53px;height:25px;line-height:25px;text-align:center;box-sizing:border-box;font-size:16.5px;font-weight:normal;color:#111;white-space:nowrap"><span style="display:inline-block;transform:scaleX(0.911);transform-origin:center">176</span></div>
<div style="position:absolute;left:114px;top:435px;width:170px;height:25px;line-height:25px;text-align:left;padding-left:4px;box-sizing:border-box;font-size:16.5px;font-weight:normal;color:#111;white-space:nowrap"><span style="display:inline-block;transform:scaleX(0.822);transform-origin:left">SPREAD MARKING</span></div>
<div style="position:absolute;left:284px;top:435px;width:83px;height:25px;line-height:25px;text-align:center;box-sizing:border-box;font-size:16.5px;font-weight:normal;color:#111;white-space:nowrap"><span style="display:inline-block;transform:scaleX(0.911);transform-origin:center">455</span></div>
<div style="position:absolute;left:367px;top:435px;width:82px;height:25px;line-height:25px;text-align:center;box-sizing:border-box;font-size:16.5px;font-weight:normal;color:#111;white-space:nowrap"><span style="display:inline-block;transform:scaleX(0.954);transform-origin:center">211</span></div>
<div style="position:absolute;left:449px;top:435px;width:83px;height:25px;line-height:25px;text-align:center;box-sizing:border-box;font-size:16.5px;font-weight:normal;color:#111;white-space:nowrap"><span style="display:inline-block;transform:scaleX(0.911);transform-origin:center">144</span></div>
<div style="position:absolute;left:532px;top:435px;width:82px;height:25px;line-height:25px;text-align:center;box-sizing:border-box;font-size:16.5px;font-weight:normal;color:#111;white-space:nowrap"><span style="display:inline-block;transform:scaleX(0.911);transform-origin:center">107</span></div>
<div style="position:absolute;left:655px;top:435px;width:83px;height:25px;line-height:25px;text-align:center;box-sizing:border-box;font-size:14px;font-weight:normal;color:#111;white-space:nowrap"><span style="display:inline-block;transform:scaleX(0.938);transform-origin:center">32</span></div>
<div style="position:absolute;left:738px;top:435px;width:82px;height:25px;line-height:25px;text-align:center;box-sizing:border-box;font-size:14px;font-weight:normal;color:#111;white-space:nowrap"><span style="display:inline-block;transform:scaleX(0.938);transform-origin:center">32</span></div>
<div style="position:absolute;left:820px;top:435px;width:83px;height:25px;line-height:25px;text-align:center;box-sizing:border-box;font-size:14px;font-weight:normal;color:#111;white-space:nowrap"><span style="display:inline-block;transform:scaleX(0.938);transform-origin:center">43</span></div>
<div style="position:absolute;left:904px;top:435px;width:82px;height:25px;line-height:25px;text-align:center;box-sizing:border-box;font-size:14px;font-weight:normal;color:#111;white-space:nowrap"><span style="display:inline-block;transform:scaleX(0.938);transform-origin:center">35</span></div>
<div style="position:absolute;left:61px;top:460px;width:223px;height:41px;line-height:41px;text-align:center;box-sizing:border-box;font-size:16px;font-weight:bold;color:#111;white-space:nowrap"><span style="display:inline-block;transform:scaleX(0.822);transform-origin:center">TOTAL</span></div>
<div style="position:absolute;left:284px;top:460px;width:83px;height:41px;line-height:41px;text-align:center;box-sizing:border-box;font-size:16px;font-weight:bold;color:#111;white-space:nowrap"><span style="display:inline-block;transform:scaleX(0.948);transform-origin:center">3,657</span></div>
<div style="position:absolute;left:367px;top:460px;width:82px;height:41px;line-height:41px;text-align:center;box-sizing:border-box;font-size:16px;font-weight:bold;color:#111;white-space:nowrap"><span style="display:inline-block;transform:scaleX(0.948);transform-origin:center">1,454</span></div>
<div style="position:absolute;left:449px;top:460px;width:83px;height:41px;line-height:41px;text-align:center;box-sizing:border-box;font-size:16px;font-weight:bold;color:#111;white-space:nowrap"><span style="display:inline-block;transform:scaleX(0.948);transform-origin:center">1,342</span></div>
<div style="position:absolute;left:532px;top:460px;width:82px;height:41px;line-height:41px;text-align:center;box-sizing:border-box;font-size:16px;font-weight:bold;color:#111;white-space:nowrap"><span style="display:inline-block;transform:scaleX(0.946);transform-origin:center">861</span></div>
<div style="position:absolute;left:655px;top:461px;width:83px;height:41px;line-height:41px;text-align:center;box-sizing:border-box;font-size:13.5px;font-weight:bold;color:#111;white-space:nowrap"><span style="display:inline-block;transform:scaleX(1.033);transform-origin:center">284</span></div>
<div style="position:absolute;left:738px;top:461px;width:82px;height:41px;line-height:41px;text-align:center;box-sizing:border-box;font-size:13.5px;font-weight:bold;color:#111;white-space:nowrap"><span style="display:inline-block;transform:scaleX(1.033);transform-origin:center">271</span></div>
<div style="position:absolute;left:820px;top:461px;width:83px;height:41px;line-height:41px;text-align:center;box-sizing:border-box;font-size:13.5px;font-weight:bold;color:#111;white-space:nowrap"><span style="display:inline-block;transform:scaleX(1.033);transform-origin:center">306</span></div>
<div style="position:absolute;left:904px;top:461px;width:82px;height:41px;line-height:41px;text-align:center;box-sizing:border-box;font-size:13.5px;font-weight:bold;color:#111;white-space:nowrap"><span style="display:inline-block;transform:scaleX(1.033);transform-origin:center">285</span></div>
<!-- corner box thick -->
<div class="a" style="left:13px;top:149px;width:44px;height:19px;background:#f8f9fa"></div>
<div class="a" style="left:57px;top:148px;width:4px;height:25px;background:#bdbdbd"></div>
<div class="a" style="left:13px;top:168px;width:48px;height:4px;background:#bdbdbd"></div>
<!-- scrollbar area -->
<div class="a" style="left:941px;top:149px;width:13px;height:380px;background:#fff;border-left:1px solid #e0e0e0"></div>
<div class="a" style="left:943px;top:175px;width:9px;height:28px;background:#dadce0;border-radius:5px"></div>
<!-- selection -->
<div class="a" style="left:113px;top:307px;width:172px;height:27px;box-sizing:border-box;border:2px solid #1a4fc6"></div>
<div class="a" style="left:279px;top:328px;width:6px;height:7px;background:#1a4fc6;border-left:1px solid #fff;border-top:1px solid #fff"></div>
<!-- popup -->
<div class="a" style="left:287px;top:310px;width:246px;height:140px;background:#f5f5f5"></div>
<div class="a" style="left:287px;top:408px;width:246px;height:40px;background:#fdfdfd"></div>
<div class="a" style="left:302px;top:325.7px;font-size:15.5px;color:#202124;-webkit-text-stroke:0.35px #202124">Edit history</div>
<svg class="a" style="left:480px;top:327px" width="12" height="15" viewBox="0 0 12 15"><path d="M9.5 1.5 L3 7.5 L9.5 13.5" fill="none" stroke="#188038" stroke-width="2.2"/></svg>
<svg class="a" style="left:509px;top:327px" width="12" height="15" viewBox="0 0 12 15"><path d="M2.5 1.5 L9 7.5 L2.5 13.5" fill="none" stroke="#80868b" stroke-width="1.8"/></svg>
<div class="a" style="left:302px;top:361px;width:34px;height:34px;border-radius:50%;background:#bb3511;box-shadow:0 0 0 1.5px #fff;color:#fff;font-size:17px;font-weight:bold;line-height:34px;text-align:center">R</div>
<div class="a" style="left:342px;top:361px;width:135px;height:18px;background:linear-gradient(#e6e6e6,#e8e8e8 45%,#dadada 55%,#cdcdcd 78%,#dddddd)"></div>
<div class="a" style="left:346px;top:380px;font-size:13px;color:#3c4043;transform:scaleX(0.95);transform-origin:left;white-space:nowrap">January 5, 9:51 PM</div>
<div class="a" style="left:302px;top:422px;font-size:14.5px;color:#202124;white-space:nowrap;transform:scaleX(0.953);transform-origin:left"><span style="-webkit-text-stroke:0.4px #202124">Replaced:</span> <i style="color:#3c4043">"SKIP"</i> <span style="-webkit-text-stroke:0.4px #202124">with</span> <i style="color:#3c4043">"SHORT"</i></div>
<!-- red annotation border -->
<div class="a" style="left:285px;top:308px;width:251px;height:147px;box-sizing:border-box;border:4px solid #f20d0d;border-width:3.5px 4px 4.5px 3.5px"></div>
</div>
<!-- techjunkie watermark -->
<div class="a" style="left:885px;top:4px;width:71px;height:18px;background:#d9d9d9;clip-path:polygon(0 50%,8px 0,100% 0,100% 100%,8px 100%)"></div>
<div class="a" style="left:864px;top:4px;width:19px;height:19px;border-radius:50%;background:#1d2433"></div>
<div class="a" style="left:867px;top:5px;font-size:15px;font-weight:bold;color:#f5c518;letter-spacing:-2px">T<span style="color:#fff">J</span></div>
<div class="a" style="left:888px;top:6px;font-size:11px;font-weight:bold;white-space:nowrap;letter-spacing:-0.75px"><span style="color:#e8900c">TECH</span><span style="color:#111">JUNKIE</span></div>
</body></html>
